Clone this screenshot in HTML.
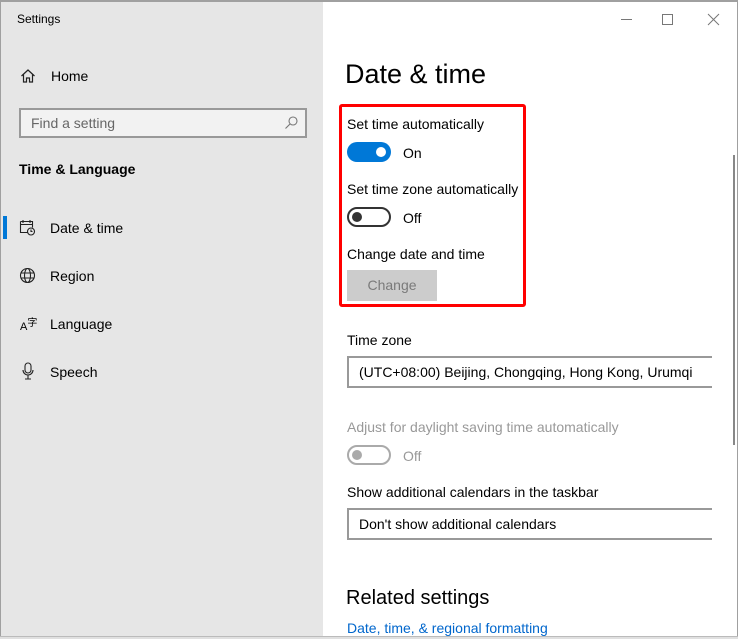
<!DOCTYPE html>
<html><head><style>
*{margin:0;padding:0;box-sizing:border-box}
body{width:738px;height:639px;overflow:hidden;background:#fff;font-family:"Liberation Sans",sans-serif;position:relative;color:#000}
.win{position:absolute;left:0;top:0;width:738px;height:639px;border:1px solid #a0a0a0;border-top:2px solid #a0a0a0}
.side{position:absolute;left:1px;top:2px;width:322px;height:636px;background:#e6e6e6}
.t{position:absolute;white-space:nowrap}
.nav{font-size:14px;color:#000}
svg{position:absolute}
</style></head><body>
<div class="win"></div>
<div class="side"></div>
<div class="t" style="left:17px;top:12px;font-size:12px">Settings</div>
<svg style="left:20px;top:68px" width="16" height="16" viewBox="0 0 16 16" fill="none" stroke="#222" stroke-width="1.2"><path d="M1.5 8L8 2l6.5 6M3.5 6.5V14h3v-4h3v4h3V6.5"/></svg>
<div class="t nav" style="left:51px;top:68px">Home</div>
<div class="t" style="left:19px;top:108px;width:288px;height:30px;border:2px solid #999;background:#f2f2f2"></div>
<div class="t" style="left:31px;top:115px;font-size:14px;color:#666">Find a setting</div>
<svg style="left:284px;top:115px" width="15" height="15" viewBox="0 0 15 15" fill="none" stroke="#777" stroke-width="1.1"><circle cx="9" cy="6" r="4"/><path d="M6 9l-4.5 4.5"/></svg>
<div class="t" style="left:19px;top:161px;font-size:14px;font-weight:bold">Time &amp; Language</div>
<div class="t" style="left:3px;top:216px;width:4px;height:23px;background:#0078d7"></div>
<svg style="left:19px;top:219px" width="17" height="17" viewBox="0 0 17 17" fill="none" stroke="#222" stroke-width="1.1"><path d="M1.5 2.5h12v6M1.5 2.5v11h7M1.5 5.5h12M4 1v3M11 1v3"/><circle cx="12" cy="12.5" r="3.5"/><path d="M12 10.5v2h1.5"/></svg>
<div class="t nav" style="left:50px;top:220px">Date &amp; time</div>
<svg style="left:19px;top:267px" width="17" height="17" viewBox="0 0 17 17" fill="none" stroke="#222" stroke-width="1.1"><circle cx="8.5" cy="8.5" r="7"/><ellipse cx="8.5" cy="8.5" rx="3" ry="7"/><path d="M1.5 6h14M1.5 11h14"/></svg>
<div class="t nav" style="left:50px;top:268px">Region</div>
<div class="t" style="left:20px;top:316px;font-size:11px;line-height:11px">A<span style="font-size:10px;vertical-align:4px;font-family:'Noto Sans CJK SC',sans-serif">字</span></div>
<div class="t nav" style="left:50px;top:316px">Language</div>
<svg style="left:21px;top:362px" width="14" height="18" viewBox="0 0 14 18" fill="none" stroke="#222" stroke-width="1.1"><rect x="4" y="1" width="6" height="10" rx="3"/><path d="M2 8a5 5 0 0 0 10 0M7 13v4M4 17h6"/></svg>
<div class="t nav" style="left:50px;top:364px">Speech</div>
<svg style="left:621px;top:13px" width="100" height="14" viewBox="0 0 100 14" fill="none" stroke="#777" stroke-width="1"><path d="M0 6.5h11"/><rect x="41.5" y="1.5" width="10" height="10"/><path d="M87 1l11 11M98 1L87 12"/></svg>
<div class="t" style="left:345px;top:59px;font-size:27px">Date &amp; time</div>
<div class="t" style="left:339px;top:104px;width:187px;height:203px;border:3px solid #f00;border-radius:3px"></div>
<div class="t" style="left:347px;top:116px;font-size:14px">Set time automatically</div>
<div class="t" style="left:347px;top:142px;width:44px;height:20px;border-radius:10px;background:#0078d7"></div>
<div class="t" style="left:376px;top:147px;width:10px;height:10px;border-radius:5px;background:#fff"></div>
<div class="t" style="left:403px;top:145px;font-size:14px">On</div>
<div class="t" style="left:347px;top:181px;font-size:14px">Set time zone automatically</div>
<div class="t" style="left:347px;top:207px;width:44px;height:20px;border-radius:10px;border:2px solid #333"></div>
<div class="t" style="left:352px;top:212px;width:10px;height:10px;border-radius:5px;background:#333"></div>
<div class="t" style="left:403px;top:210px;font-size:14px">Off</div>
<div class="t" style="left:347px;top:246px;font-size:14px">Change date and time</div>
<div class="t" style="left:347px;top:270px;width:90px;height:31px;background:#ccc;color:#7a7a7a;font-size:14px;text-align:center;line-height:31px">Change</div>
<div class="t" style="left:347px;top:332px;font-size:14px">Time zone</div>
<div class="t" style="left:347px;top:356px;width:380px;height:32px;border:2px solid #999"></div>
<div class="t" style="left:359px;top:364px;font-size:14px">(UTC+08:00) Beijing, Chongqing, Hong Kong, Urumqi</div>
<div class="t" style="left:712px;top:350px;width:20px;height:200px;background:#fff"></div>
<div class="t" style="left:347px;top:419px;font-size:14px;color:#999">Adjust for daylight saving time automatically</div>
<div class="t" style="left:347px;top:445px;width:44px;height:20px;border-radius:10px;border:2px solid #aaa"></div>
<div class="t" style="left:352px;top:450px;width:10px;height:10px;border-radius:5px;background:#aaa"></div>
<div class="t" style="left:403px;top:448px;font-size:14px;color:#999">Off</div>
<div class="t" style="left:347px;top:484px;font-size:14px">Show additional calendars in the taskbar</div>
<div class="t" style="left:347px;top:508px;width:380px;height:32px;border:2px solid #999"></div>
<div class="t" style="left:712px;top:500px;width:20px;height:50px;background:#fff"></div>
<div class="t" style="left:359px;top:516px;font-size:14px">Don't show additional calendars</div>
<div class="t" style="left:346px;top:587px;font-size:20px">Related settings</div>
<div class="t" style="left:347px;top:620px;font-size:14px;color:#0066cc">Date, time, &amp; regional formatting</div>
<div class="t" style="left:733px;top:155px;width:2px;height:290px;background:#888"></div>
<div class="t" style="left:0;top:636px;width:738px;height:3px;background:#e0e0e0;border-top:1px solid #bbb"></div>
</body></html>
